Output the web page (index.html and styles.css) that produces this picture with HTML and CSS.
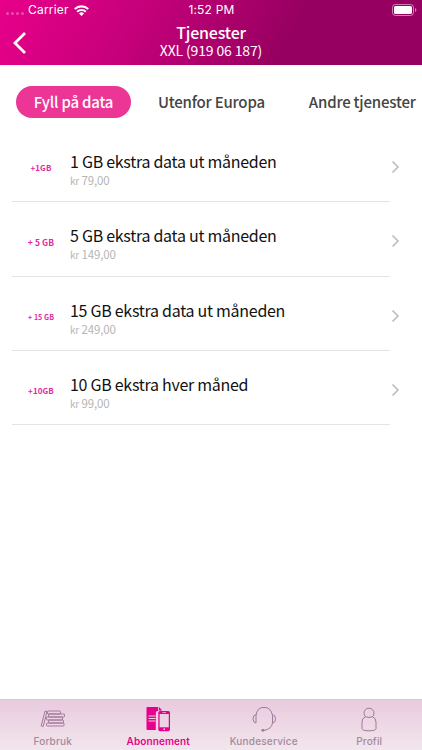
FILE: index.html
```html
<!DOCTYPE html>
<html lang="no">
<head>
   <meta charset="UTF-8">
   <meta name="viewport" content="width=device-width, initial-scale=1.0">
   <title>Tjenester</title>
   <link rel="stylesheet" href="styles.css">
</head>
<body>
   <div class="app">
      <header>
         <div class="status">
            <div class="carrier">
               <span class="dots"><i></i><i></i><i></i><i></i></span>
               <span>Carrier</span>
               <svg width="15" height="11" viewBox="0 0 15 11" fill="none" stroke="#fff" stroke-width="2.1">
                  <path d="M0.8 4.1a9.6 9.6 0 0 1 13.4 0M3.2 6.8a6.2 6.2 0 0 1 8.6 0"/>
                  <path d="M7.5 11L5 8.500a3.6 3.6 0 0 1 5 0z" fill="#fff" stroke="none"/>
               </svg>
            </div>
            <span class="time">1:52 PM</span>
            <svg class="battery" width="25" height="12" viewBox="0 0 25 12">
               <rect x="0.5" y="0.5" width="21" height="11" rx="3" fill="none" stroke="#fff" stroke-opacity=".5"/>
               <rect x="2" y="2" width="18" height="8" rx="1.6" fill="#fff"/>
               <path d="M23 4v4q1.400-.6 1.400-2T23 4z" fill="#fff" fill-opacity=".5"/>
            </svg>
         </div>
         <div class="titlebar">
            <svg class="back" width="14" height="22" viewBox="0 0 14 22" fill="none" stroke="#fff" stroke-width="2.8">
               <path d="M12 1L2 11l10 10"/>
            </svg>
            <div class="title">
               <h1>Tjenester</h1>
               <p>XXL (919 06 187)</p>
            </div>
         </div>
      </header>
      <div class="tabs">
         <a class="tab active">Fyll på data</a>
         <a class="tab">Utenfor Europa</a>
         <a class="tab">Andre tjenester</a>
      </div>
      <ul class="list">
         <li>
            <span class="badge">+1GB</span>
            <div class="info"><h2>1 GB ekstra data ut måneden</h2><p><small>kr</small> 79,00</p></div>
            <svg class="arrow" width="9" height="14" viewBox="0 0 9 14"><path d="M1.500 1.500L7 7l-5.500 5.500"/></svg>
         </li>
         <li>
            <span class="badge wide">+ 5 GB</span>
            <div class="info"><h2>5 GB ekstra data ut måneden</h2><p><small>kr</small> 149,00</p></div>
            <svg class="arrow" width="9" height="14" viewBox="0 0 9 14"><path d="M1.500 1.500L7 7l-5.500 5.500"/></svg>
         </li>
         <li>
            <span class="badge small">+ 15 GB</span>
            <div class="info"><h2>15 GB ekstra data ut måneden</h2><p><small>kr</small> 249,00</p></div>
            <svg class="arrow" width="9" height="14" viewBox="0 0 9 14"><path d="M1.500 1.500L7 7l-5.500 5.500"/></svg>
         </li>
         <li>
            <span class="badge">+10GB</span>
            <div class="info"><h2>10 GB ekstra hver måned</h2><p><small>kr</small> 99,00</p></div>
            <svg class="arrow" width="9" height="14" viewBox="0 0 9 14"><path d="M1.500 1.500L7 7l-5.500 5.500"/></svg>
         </li>
      </ul>
      <nav>
         <a>
            <svg width="26" height="26" viewBox="0 0 26 26" fill="none" stroke="#a0789a" stroke-width="1">
               <path d="M5 5l2 .5-3.800 15-2-.5z"/>
               <rect x="7.500" y="5" width="13" height="3" rx=".8"/>
               <rect x="8.500" y="8" width="16" height="3" rx=".8"/>
               <rect x="6.500" y="11" width="16" height="3" rx=".8"/>
               <rect x="8.500" y="14" width="15" height="3" rx=".8"/>
               <rect x="6.500" y="17" width="17.500" height="3" rx=".8"/>
            </svg>
            <span>Forbruk</span>
         </a>
         <a class="active">
            <svg width="26" height="26" viewBox="0 0 26 26">
               <path d="M2.500 1h10.700v4h-.8q-1.600 0-1.600 1.600V24H2.500q-1 0-1-1V2q0-1 1-1zM14 1l3.300 3.500H14z" fill="#e6008c"/>
               <path d="M3.500 10h7M3.500 12.500h7M3.500 15h7" stroke="#f4cfe5" stroke-width="1"/>
               <rect x="13.300" y="5" width="11.700" height="20.200" rx="1.700" fill="#e6008c"/>
               <path d="M14.600 8h9.200v13.300h-9.200z" fill="#ecd3e3"/>
               <path d="M17.400 6.500h3.600" stroke="#f4cfe5" stroke-width=".7"/>
               <circle cx="19.200" cy="23.200" r=".9" fill="#f4cfe5"/>
            </svg>
            <span>Abonnement</span>
         </a>
         <a>
            <svg width="26" height="26" viewBox="0 0 26 26" fill="none" stroke="#a0789a" stroke-width="1">
               <path d="M5 17V9.500Q6 1.300 13 1.300T21.500 9.500V17q-1 6-8 7.300M5 8.500q-3 .5-3 4.300T5 17M21.500 8.500q3 .5 3 4.300t-3 4.200"/>
               <ellipse cx="12" cy="24.300" rx="1.500" ry=".8" fill="#a0789a"/>
            </svg>
            <span>Kundeservice</span>
         </a>
         <a>
            <svg width="26" height="26" viewBox="0 0 26 26" fill="none" stroke="#a0789a" stroke-width="1">
               <path d="M9.500 10.700a5 5 0 1 1 7 0q3.500 1.300 3.500 5.300v6.500q0 2.300-7 2.300t-7-2.300V16q0-4 3.500-5.300 3.500 1.600 7 0"/>
            </svg>
            <span>Profil</span>
         </a>
      </nav>
   </div>
</body>
</html>
```
FILE: styles.css
```css
* {
   margin: 0;
   padding: 0;
   box-sizing: border-box;
}
body {
   background-color: #fff;
   font-family: "Noto Sans CJK SC", "Noto Sans", sans-serif;
}
svg {
   display: block;
   flex-shrink: 0;
}
.app {
   width: 422px;
   height: 750px;
   display: flex;
   flex-direction: column;
   overflow: hidden;
}
header {
   height: 65px;
   background: linear-gradient(118deg, #e8008a 0%, #c5007a 33%, #960060 68%, #960060 100%);
   color: #fff;
}
.status {
   display: grid;
   grid-template-columns: 1fr auto 1fr;
   height: 20px;
   padding: 0 5px 0 6px;
   align-items: center;
   font-family: Inter, sans-serif;
   font-size: 12px;
   line-height: 20px;
   letter-spacing: 0.2px;
}
.carrier {
   display: flex;
   align-items: center;
}
.carrier svg {
   margin-left: 5px;
}
.dots {
   display: flex;
   gap: 2px;
   margin: 7px 4px 0 0;
}
.dots i {
   width: 3px;
   height: 3px;
   border-radius: 50%;
   background-color: rgba(255, 255, 255, 0.3);
}
.battery {
   justify-self: end;
}
.titlebar {
   display: grid;
   grid-template-columns: 40px 1fr 40px;
   height: 45px;
}
.back {
   margin: 12px 0 0 13px;
}
.title {
   text-align: center;
   padding-top: 4px;
}
.title h1 {
   font-size: 16px;
   font-weight: 500;
   line-height: 17px;
   letter-spacing: -0.2px;
}
.title p {
   font-size: 14px;
   line-height: 18px;
   letter-spacing: -0.15px;
}
.tabs {
   display: flex;
   margin: 21px 0 0 16px;
   height: 32px;
}
.tab {
   font-size: 15px;
   font-weight: 500;
   line-height: 32px;
   letter-spacing: -0.2px;
   color: #444;
   white-space: nowrap;
   margin-left: 44px;
}
.tab.active {
   width: 115px;
   margin-left: 0;
   margin-right: -17px;
   text-align: center;
   border-radius: 16px;
   color: #fff;
   background-color: #ec3696;
}
.list {
   list-style: none;
   width: 390px;
   padding-left: 12px;
   margin-top: 10px;
   flex: 1;
}
.list li {
   display: flex;
   height: 74.3px;
   border-bottom: 1px solid #e4e4e4;
}
.badge {
   width: 58px;
   padding-top: 30px;
   text-align: center;
   font-size: 8px;
   line-height: 20px;
   font-weight: 700;
   letter-spacing: 0.1px;
   color: #e2279c;
}
.badge.wide {
   font-size: 8.5px;
}
.badge.small {
   font-size: 7px;
}
.info {
   flex: 1;
   padding-top: 21px;
   white-space: nowrap;
}
.info h2 {
   font-size: 16px;
   font-weight: 400;
   line-height: 24px;
   letter-spacing: -0.28px;
   color: #111;
}
.info p {
   font-size: 11.5px;
   line-height: 14px;
   letter-spacing: -0.15px;
   color: #b5b5b5;
}
.info small {
   font-size: 10px;
}
.arrow {
   margin: 32px -10px 0 0;
   fill: none;
   stroke: #bdbdbd;
   stroke-width: 1.6;
}
nav {
   display: grid;
   grid-template-columns: repeat(4, 1fr);
   height: 51px;
   border-top: 1px solid #d7c5d0;
   background: linear-gradient(#e9cade, #f2e6ed);
}
nav a {
   display: flex;
   flex-direction: column;
   align-items: center;
   padding-top: 6px;
   font-family: Inter, sans-serif;
   font-size: 10px;
   font-weight: 500;
   line-height: 19px;
   letter-spacing: 0.2px;
   color: #a48a9c;
}
nav a.active {
   color: #e6008c;
   font-weight: 600;
   letter-spacing: 0.1px;
}
```
